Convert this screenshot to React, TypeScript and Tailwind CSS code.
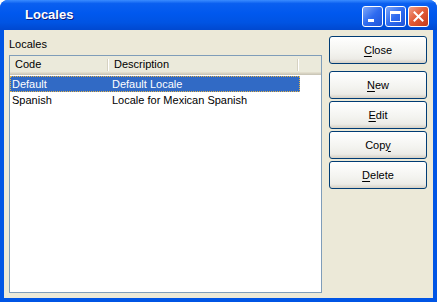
const font = { fontFamily: '"Liberation Sans", Arial, sans-serif' };

type BtnProps = { label: string; mnemonic: number };

function XpButton({ label, mnemonic }: BtnProps) {
  return (
    <button className="flex h-[28px] w-[98px] items-center justify-center rounded-[3px] border border-[#003C74] bg-[linear-gradient(#FFFFFF,#F3F3EF_60%,#ECEBE6_85%,#D6D0C5)] text-[11px] leading-none text-black">
      {label.slice(0, mnemonic)}
      <span className="underline underline-offset-[2px]">{label[mnemonic]}</span>
      {label.slice(mnemonic + 1)}
    </button>
  );
}

function TitleButton({ kind }: { kind: 'min' | 'max' | 'close' }) {
  const isClose = kind === 'close';
  return (
    <div
      className={
        isClose
          ? 'flex h-[21px] w-[21px] items-center justify-center rounded-[3px] border border-white bg-[linear-gradient(135deg,#F0A08A,#E35D38_45%,#C4391A)]'
          : 'flex h-[21px] w-[21px] items-center justify-center rounded-[3px] border border-white bg-[linear-gradient(135deg,#7FA8F8,#2E6BF0_50%,#1E54D8)]'
      }
    >
      <svg width="13" height="13" viewBox="0 0 13 13">
        {kind === 'min' && <rect x="2" y="9" width="6" height="3" fill="white" />}
        {kind === 'max' && (
          <>
            <rect x="1.5" y="1.5" width="10" height="10" fill="none" stroke="white" strokeWidth="1" />
            <rect x="1" y="1" width="11" height="3" fill="white" />
          </>
        )}
        {isClose && (
          <path d="M2.5 2.5 L10.5 10.5 M10.5 2.5 L2.5 10.5" stroke="white" strokeWidth="2" strokeLinecap="square" />
        )}
      </svg>
    </div>
  );
}

const rows = [
  { code: 'Default', description: 'Default Locale' },
  { code: 'Spanish', description: 'Locale for Mexican Spanish' },
];

export default function App() {
  return (
    <div style={font} className="flex h-[302px] w-[437px] flex-col overflow-hidden rounded-t-[8px] bg-[#0055E5]">
      <div className="flex h-[30px] shrink-0 items-center justify-between bg-[linear-gradient(#3A8CFF,#0A5FF0_12%,#0058EE_45%,#0054E3_75%,#0048D0)] pl-[25px] pr-[8px]">
        <span className="text-[13px] font-bold text-white [text-shadow:1px_1px_0_#0A1E80]">Locales</span>
        <div className="flex gap-[2px] pt-[2px]">
          <TitleButton kind="min" />
          <TitleButton kind="max" />
          <TitleButton kind="close" />
        </div>
      </div>
      <div className="flex flex-1 border-x-4 border-b-4 border-[#0055E5] bg-[#ECE9D8]">
        <div className="flex flex-col pl-[5px] pt-[8px]">
          <div className="h-[13px] text-[11px] leading-[13px] text-black">Locales</div>
          <div className="mt-[4px] h-[238px] w-[313px] border border-[#7F9DB9] bg-white">
            <div className="flex h-[19px] bg-[#EBEADB] text-[11px] text-black shadow-[inset_0_-1px_0_#CBC7B8,inset_0_-2px_0_#D6D2C2,inset_0_-3px_0_#E2DECD]">
              <div className="flex w-[99px] items-center justify-between pb-[2px] pl-[5px]">
                <span>Code</span>
                <span className="h-[12px] w-[2px] border-l border-r border-l-[#D6D2C2] border-r-white" />
              </div>
              <div className="flex w-[190px] items-center justify-between pb-[2px] pl-[5px]">
                <span>Description</span>
                <span className="h-[12px] w-[2px] border-l border-r border-l-[#D6D2C2] border-r-white" />
              </div>
            </div>
            <div className="mt-[1px]">
              {rows.map((r, i) => (
                <div
                  key={r.code}
                  className={
                    i === 0
                      ? 'flex h-[16px] w-[290px] items-center border border-dotted border-[#E3B34A] bg-[#316AC5] text-[11px] text-white'
                      : 'flex h-[16px] w-[290px] items-center border border-transparent text-[11px] text-black'
                  }
                >
                  <span className="w-[100px] pl-[1px]">{r.code}</span>
                  <span className="pl-[1px]">{r.description}</span>
                </div>
              ))}
            </div>
          </div>
        </div>
        <div className="flex flex-col pl-[7px] pt-[6px]">
          <XpButton label="Close" mnemonic={0} />
          <div className="mt-[7px] flex flex-col gap-[2px]">
            <XpButton label="New" mnemonic={0} />
            <XpButton label="Edit" mnemonic={0} />
            <XpButton label="Copy" mnemonic={3} />
            <XpButton label="Delete" mnemonic={0} />
          </div>
        </div>
      </div>
    </div>
  );
}
